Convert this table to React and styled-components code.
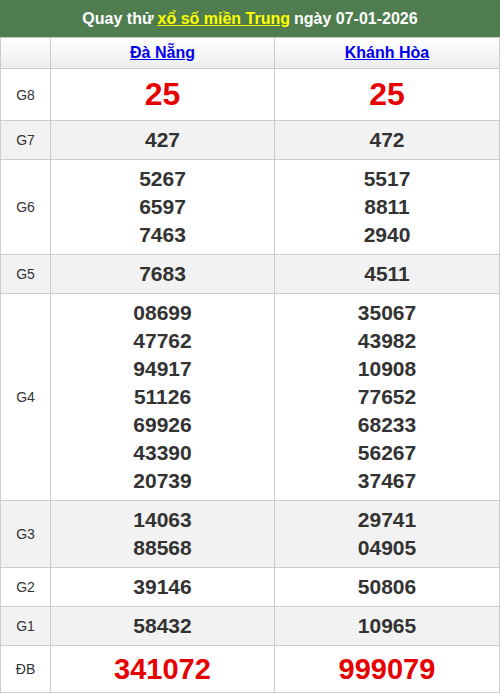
import { createGlobalStyle, styled, css } from "styled-components";

const GlobalStyle = createGlobalStyle`
  body {
    margin: 0;
    background: #fff;
    font-family: "Liberation Sans", Arial, sans-serif;
  }
`;

const Wrap = styled.div`
  width: 500px;
`;

const TitleBar = styled.div`
  background: #4f7d4f;
  color: #fff;
  height: 37px;
  display: flex;
  align-items: center;
  justify-content: center;
  font-size: 16px;
  font-weight: bold;
`;

const TitleLink = styled.a`
  color: #ffff00;
  text-decoration: underline;
  margin: 0 4px;
`;

const Table = styled.table`
  width: 500px;
  border-collapse: collapse;
  table-layout: fixed;
`;

const HeadCell = styled.th`
  height: 30px;
  padding: 0;
  border: 1px solid #ccc;
  background: linear-gradient(#ffffff, #ececec);
  font-size: 16px;
  font-weight: bold;
  text-align: center;
`;

const ProvinceLink = styled.a`
  color: #0000ee;
  text-decoration: underline;
`;

const Row = styled.tr`
  background: ${(p) => (p.$alt ? "#f2f2f2" : "#fff")};
`;

const Label = styled.td`
  border: 1px solid #ccc;
  padding: 0;
  text-align: center;
  font-size: 14px;
  color: #333;
`;

const Cell = styled.td`
  border: 1px solid #ccc;
  padding: 5px 0;
  text-align: center;
  vertical-align: middle;
`;

const Num = styled.div`
  font-size: 21px;
  font-weight: bold;
  line-height: 28px;
  color: #333;

  ${(p) =>
    p.$size === "g8" &&
    css`
      font-size: 32px;
      line-height: 41px;
      color: #e60000;
    `}

  ${(p) =>
    p.$size === "db" &&
    css`
      font-size: 29px;
      line-height: 36px;
      color: #e60000;
    `}
`;

const rows = [
  { label: "G8", a: ["25"], b: ["25"], size: "g8" },
  { label: "G7", a: ["427"], b: ["472"] },
  { label: "G6", a: ["5267", "6597", "7463"], b: ["5517", "8811", "2940"] },
  { label: "G5", a: ["7683"], b: ["4511"] },
  {
    label: "G4",
    a: ["08699", "47762", "94917", "51126", "69926", "43390", "20739"],
    b: ["35067", "43982", "10908", "77652", "68233", "56267", "37467"],
  },
  { label: "G3", a: ["14063", "88568"], b: ["29741", "04905"] },
  { label: "G2", a: ["39146"], b: ["50806"] },
  { label: "G1", a: ["58432"], b: ["10965"] },
  { label: "ĐB", a: ["341072"], b: ["999079"], size: "db" },
];

export default function App() {
  return (
    <Wrap>
      <GlobalStyle />
      <TitleBar>
        Quay thử<TitleLink href="#">xổ số miền Trung</TitleLink>ngày 07-01-2026
      </TitleBar>
      <Table>
        <colgroup>
          <col style={{ width: 50 }} />
          <col style={{ width: 224 }} />
          <col style={{ width: 225 }} />
        </colgroup>
        <thead>
          <tr>
            <HeadCell />
            <HeadCell>
              <ProvinceLink href="#">Đà Nẵng</ProvinceLink>
            </HeadCell>
            <HeadCell>
              <ProvinceLink href="#">Khánh Hòa</ProvinceLink>
            </HeadCell>
          </tr>
        </thead>
        <tbody>
          {rows.map((r, i) => (
            <Row key={r.label} $alt={i % 2 === 1}>
              <Label>{r.label}</Label>
              <Cell>
                {r.a.map((n, j) => (
                  <Num key={j} $size={r.size}>
                    {n}
                  </Num>
                ))}
              </Cell>
              <Cell>
                {r.b.map((n, j) => (
                  <Num key={j} $size={r.size}>
                    {n}
                  </Num>
                ))}
              </Cell>
            </Row>
          ))}
        </tbody>
      </Table>
    </Wrap>
  );
}
